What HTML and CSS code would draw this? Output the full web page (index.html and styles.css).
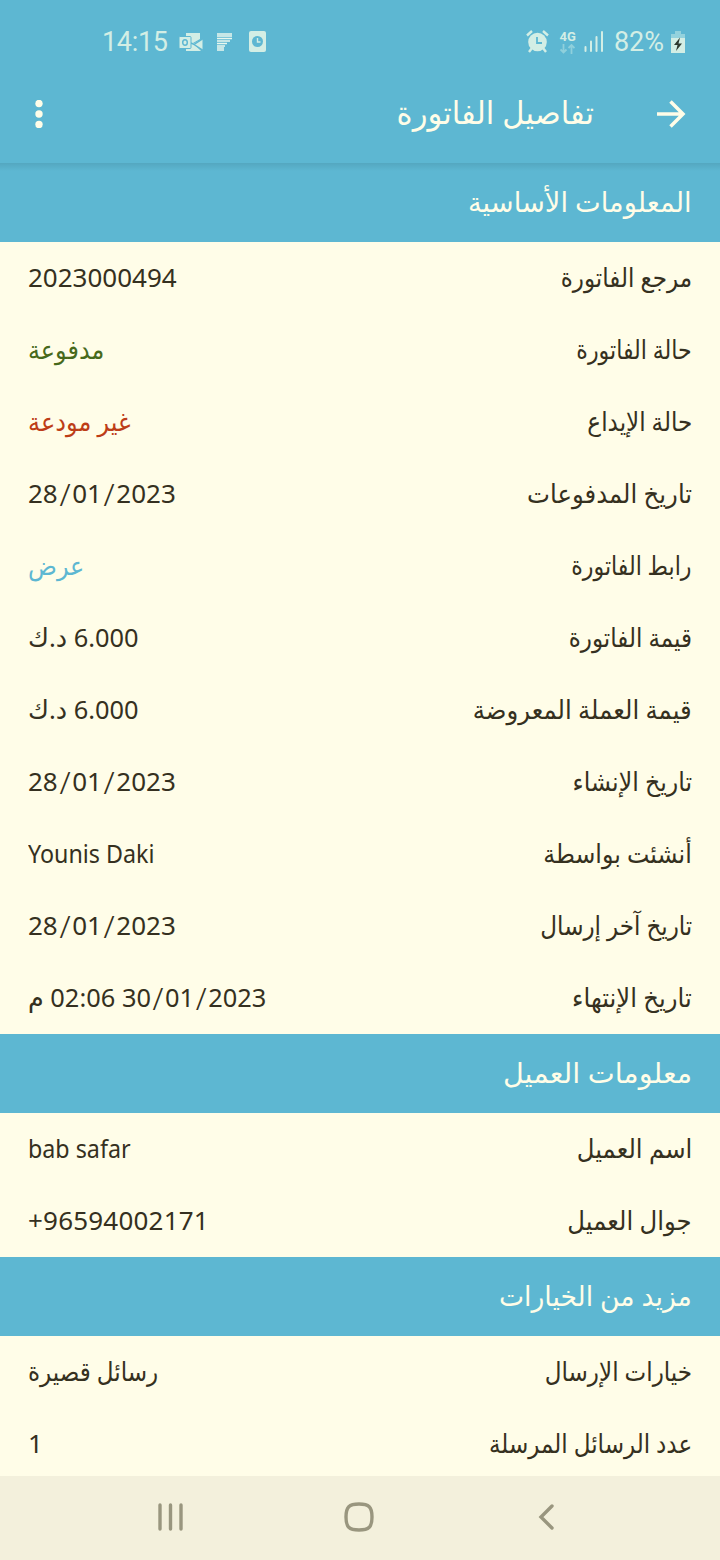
FILE: index.html
```html
<!DOCTYPE html>
<html lang="ar" dir="rtl">
<head>
  <meta charset="UTF-8">
  <title>تفاصيل الفاتورة</title>
  <link rel="stylesheet" href="styles.css">
</head>
<body>

<div class="screen">
  <div class="status-bar" dir="ltr">
    <div class="status-left">
      <span class="clock">14:15</span>
      <svg class="ic-outlook" width="24" height="20" viewBox="0 0 24 20">
        <path d="M7 1h14v6l-7 4 8 8H7z" fill="#d3eee5"/>
        <path d="M23.500 7v11.500L14 12z" fill="#d3eee5"/>
        <path d="M12 11l3 1.500L24 6.500M15 12.500l9 6" stroke="#5db7d2" stroke-width="1.500" fill="none"/>
        <rect x="0" y="4.500" width="12" height="12" rx="1" fill="#d3eee5" stroke="#5db7d2"/>
        <ellipse cx="6" cy="10.500" rx="2.300" ry="2.800" fill="none" stroke="#5db7d2" stroke-width="1.500"/>
      </svg>
      <svg class="ic-lines" width="15" height="18" viewBox="0 0 15 18">
        <path d="M0 1h15M0 3h15M0 5.500h15M0 8h13M0 10.500h10M0 13h8M0 15h7M0 17h7" stroke="#e9f8ee" stroke-width="1.500"/>
      </svg>
      <svg class="ic-card" width="17" height="21" viewBox="0 0 17 21">
        <rect width="17" height="21" rx="2" fill="#d3eee5"/>
        <circle cx="8.500" cy="10.500" r="5.500" fill="#5db7d2"/>
        <path d="M8.500 7v4h3" stroke="#d3eee5" stroke-width="1.400" fill="none"/>
      </svg>
    </div>
    <div class="status-right">
      <svg class="ic-alarm" width="23" height="23" viewBox="0 0 23 23">
        <path d="M1 5.500l5-4.500M22 5.500L17 1M6 18l-3 4M17 18l3 4" stroke="#d3eee5" stroke-width="2.400" fill="none"/>
        <circle cx="11.500" cy="12" r="9.300" fill="#d3eee5"/>
        <path d="M11 7v6h5" stroke="#5db7d2" stroke-width="1.800" fill="none"/>
      </svg>
      <div class="network">
        <span>4G</span>
        <svg width="15" height="10" viewBox="0 0 15 10">
          <path d="M3.500 0v8.500M.5 5.500l3 3 3-3M11.500 10V1M8.500 4l3-3 3 3" stroke="#8fd0dc" stroke-width="1.800" fill="none"/>
        </svg>
      </div>
      <svg class="ic-signal" width="20" height="21" viewBox="0 0 20 21">
        <path d="M1.500 20v-4M7 20V10.500M12.500 20V6M18 20V1" stroke="#d3eee5" stroke-width="2" stroke-linecap="round"/>
      </svg>
      <span class="percent">82%</span>
      <svg class="ic-battery" width="14" height="22" viewBox="0 0 14 22">
        <path d="M4 0h6v3h4v5H0V3h4z" fill="#93d2dd"/>
        <path d="M0 7h14v15H0z" fill="#d3eee5"/>
        <path d="M9 6.500L3 14h3.500L5 20l6-7.500H7.500z" fill="#2e3a30"/>
      </svg>
    </div>
  </div>

  <header class="app-bar">
    <svg class="back" width="30" height="28" viewBox="0 0 30 28">
      <path d="M1 14h26M14.500 1.500L27 14 14.500 26.500" stroke="#fffde8" stroke-width="3.500" fill="none"/>
    </svg>
    <h1>تفاصيل الفاتورة</h1>
    <svg class="more" width="8" height="28" viewBox="0 0 8 28">
      <g fill="#fffde8"><circle cx="4" cy="3.500" r="3.700"/><circle cx="4" cy="14" r="3.700"/><circle cx="4" cy="24.500" r="3.700"/></g>
    </svg>
  </header>

  <main>
    <h2 class="first"><span class="basic">المعلومات الأساسية</span></h2>
    <div class="row"><span>مرجع الفاتورة</span><span class="num">2023000494</span></div>
    <div class="row"><span class="narrow">حالة الفاتورة</span><span class="paid">مدفوعة</span></div>
    <div class="row"><span>حالة الإيداع</span><span class="unpaid">غير مودعة</span></div>
    <div class="row"><span class="wide">تاريخ المدفوعات</span><span class="num" dir="ltr">28<i>/</i>01<i>/</i>2023</span></div>
    <div class="row"><span class="narrow">رابط الفاتورة</span><span class="link">عرض</span></div>
    <div class="row"><span>قيمة الفاتورة</span><span class="amount">6.000 د.ك</span></div>
    <div class="row"><span class="wide">قيمة العملة المعروضة</span><span class="amount">6.000 د.ك</span></div>
    <div class="row"><span class="medium">تاريخ الإنشاء</span><span class="num" dir="ltr">28<i>/</i>01<i>/</i>2023</span></div>
    <div class="row"><span class="medium">أنشئت بواسطة</span><span class="latin">Younis Daki</span></div>
    <div class="row"><span>تاريخ آخر إرسال</span><span class="num" dir="ltr">28<i>/</i>01<i>/</i>2023</span></div>
    <div class="row"><span class="wide">تاريخ الإنتهاء</span><span class="amount"><b dir="ltr">30<i>/</i>01<i>/</i>2023</b> 02:06 م</span></div>

    <h2><span class="customer">معلومات العميل</span></h2>
    <div class="row"><span class="wide">اسم العميل</span><span class="latin">bab safar</span></div>
    <div class="row"><span class="wide">جوال العميل</span><span class="num phone" dir="ltr">+96594002171</span></div>

    <h2><span class="options">مزيد من الخيارات</span></h2>
    <div class="row"><span>خيارات الإرسال</span><span>رسائل قصيرة</span></div>
    <div class="row"><span>عدد الرسائل المرسلة</span><span class="num">1</span></div>
  </main>

  <nav class="nav-bar" dir="ltr">
    <svg width="28" height="30" viewBox="0 0 28 30">
      <path d="M3 3v24M13.500 3v24M24 3v24" stroke="#99967f" stroke-width="3.400" stroke-linecap="round"/>
    </svg>
    <svg width="30" height="30" viewBox="0 0 30 30">
      <path d="M15 2C25 2 28 5 28 15S25 28 15 28 2 25 2 15 5 2 15 2z" fill="none" stroke="#99967f" stroke-width="3.400"/>
    </svg>
    <svg width="28" height="30" viewBox="0 0 28 30">
      <path d="M20 4L9 15l11 11" stroke="#99967f" stroke-width="3.400" fill="none" stroke-linecap="round"/>
    </svg>
  </nav>
</div>

</body>
</html>
```
FILE: styles.css
```css
body {
  margin: 0;
  background-color: #fffde8;
  color: #353020;
  font-family: "Noto Sans", "DejaVu Sans", sans-serif;
}
.screen {
  display: flex;
  flex-direction: column;
  height: 1560px;
  overflow: hidden;
}
svg {
  display: block;
  flex-shrink: 0;
}
.status-bar {
  display: flex;
  justify-content: space-between;
  height: 66px;
  padding: 19px 35px 0 102px;
  box-sizing: border-box;
  background-color: #5db7d2;
  color: #d3eee5;
  font-family: Roboto, sans-serif;
}
.status-left, .status-right {
  display: flex;
  align-items: center;
  padding-bottom: 2px;
}
.clock, .percent {
  font-size: 27px;
}
.clock {
  width: 66px;
  letter-spacing: -0.3px;
}
.ic-outlook {
  margin-left: 11px;
}
.ic-lines {
  margin-left: 14px;
}
.ic-card {
  margin-left: 17px;
}
.network {
  margin: 0 8px 0 11px;
  font-size: 13px;
  line-height: 14px;
  font-weight: bold;
}
.percent {
  margin: 0 7px 0 10px;
}
.app-bar {
  display: flex;
  align-items: center;
  height: 97px;
  box-sizing: border-box;
  padding: 0 34px 2px 35px;
  background-color: #5db7d2;
  color: #fffde8;
}
h1 {
  flex: 1;
  margin: 0 62px 4px 0;
  font-size: 32px;
  line-height: 60px;
  font-weight: normal;
  transform: scaleX(0.956);
  transform-origin: right;
}
main {
  flex: 1;
  min-height: 0;
  overflow: hidden;
}
h2 {
  height: 79px;
  margin: 0;
  padding: 0 28px;
  box-sizing: border-box;
  font-size: 28px;
  line-height: 77px;
  font-weight: normal;
  background-color: #5db7d2;
  color: #fffde8;
}
h2 span {
  display: inline-block;
  transform-origin: right;
}
.basic {
  transform: scaleX(0.974);
}
.customer {
  transform: scaleX(1.022);
}
.options {
  transform: scaleX(0.951);
}
h2.first {
  background-image: linear-gradient(#54a7c0, #5db7d2 8px);
}
.row {
  display: flex;
  justify-content: space-between;
  height: 72px;
  padding: 0 28px;
  font-size: 26px;
  line-height: 70px;
  white-space: nowrap;
}
/* condensed arabic, anchored to the outer edge of each column */
.row span {
  transform: scaleX(0.887);
  transform-origin: right;
}
.row span:last-child {
  transform-origin: left;
}
.row .narrow {
  transform: scaleX(0.85);
}
.row .medium {
  transform: scaleX(0.912);
}
.row .wide {
  transform: scaleX(0.937);
}
.row .num {
  transform: none;
}
.row .latin {
  transform: scaleX(0.895);
}
.row .amount {
  transform: scaleX(0.977);
}
/* tall slashes in dates */
.row i {
  display: inline-block;
  width: 14.4px;
  text-align: center;
  font-style: normal;
  font-weight: 300;
  font-size: 32px;
  line-height: 0;
  vertical-align: -3px;
}
.row b {
  display: inline-block;
  font-weight: normal;
}
.row .phone {
  letter-spacing: 0.2px;
}
.row .paid {
  color: #47691b;
  transform: scaleX(0.92);
}
.row .unpaid {
  color: #bd3d17;
  transform: scaleX(0.925);
}
.row .link {
  color: #5db7d2;
  transform: scaleX(0.92);
}
.nav-bar {
  display: flex;
  justify-content: space-between;
  align-items: center;
  height: 84px;
  padding: 0 160px 2px 157px;
  box-sizing: border-box;
  background-color: #f3f0dc;
}
```
